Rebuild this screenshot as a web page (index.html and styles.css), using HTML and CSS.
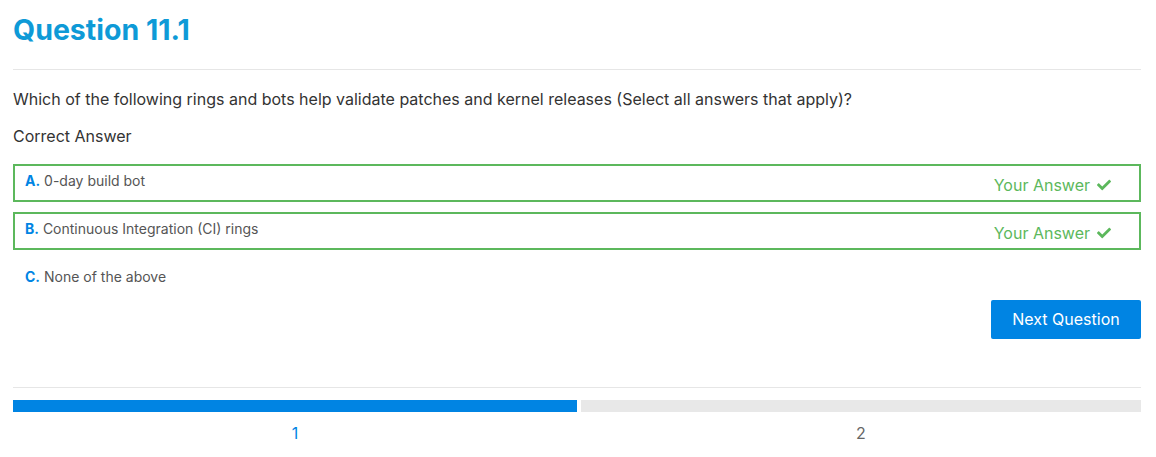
FILE: index.html
```html
<!DOCTYPE html>
<html>
<head>
<meta charset="utf-8">
<link rel="stylesheet" href="styles.css">
</head>
<body>
<div class="page">
  <h1 class="title">Question 11.1</h1>
  <hr class="rule rule-top">
  <p class="question">Which of the following rings and bots help validate patches and kernel releases (Select all answers that apply)?</p>
  <p class="status">Correct Answer</p>
  <div class="options">
    <div class="option option-correct">
      <span class="label"><b class="letter">A.</b> 0-day build bot</span>
      <span class="yours">Your Answer <svg class="check" viewBox="0 0 512 512" width="14" height="14"><path d="M173.9 439.4l-166.4-166.4c-10-10-10-26.2 0-36.2l36.2-36.2c10-10 26.2-10 36.2 0L192 312.7 432.1 72.6c10-10 26.2-10 36.2 0l36.2 36.2c10 10 10 26.2 0 36.2l-294.4 294.4c-10 10-26.2 10-36.2 0z" fill="currentColor"/></svg></span>
    </div>
    <div class="option option-correct">
      <span class="label"><b class="letter">B.</b> Continuous Integration (CI) rings</span>
      <span class="yours">Your Answer <svg class="check" viewBox="0 0 512 512" width="14" height="14"><path d="M173.9 439.4l-166.4-166.4c-10-10-10-26.2 0-36.2l36.2-36.2c10-10 26.2-10 36.2 0L192 312.7 432.1 72.6c10-10 26.2-10 36.2 0l36.2 36.2c10 10 10 26.2 0 36.2l-294.4 294.4c-10 10-26.2 10-36.2 0z" fill="currentColor"/></svg></span>
    </div>
    <div class="option">
      <span class="label"><b class="letter">C.</b> None of the above</span>
    </div>
  </div>
  <div class="actions">
    <button class="btn-next">Next Question</button>
  </div>
  <hr class="rule rule-bottom">
  <div class="progress">
    <div class="step step-done">
      <div class="bar"></div>
      <div class="num">1</div>
    </div>
    <div class="step step-next">
      <div class="bar"></div>
      <div class="num">2</div>
    </div>
  </div>
</div>
</body>
</html>
```

FILE: styles.css
```css
* { box-sizing: border-box; }
html, body { margin: 0; background: #fff; }
body { font-family: Inter, "Noto Sans", sans-serif; color: #333; }
.page { padding: 12px 15px 0 13px; }
.title {
  margin: 0;
  font-size: 28.5px;
  line-height: 36px;
  font-weight: 700;
  color: #0e9ad7;
}
.rule { border: 0; border-top: 1px solid #e6e6e6; margin: 0; }
.rule-top { margin-top: 21px; }
.question { margin: 17px 0 0; font-size: 16px; line-height: 24px; color: #333; }
.status { margin: 13px 0 0; font-size: 16px; line-height: 24px; color: #333; }
.options { margin-top: 16px; display: flex; flex-direction: column; gap: 10px; }
.option {
  height: 38px;
  border: 2px solid transparent;
  display: flex;
  justify-content: space-between;
  align-items: flex-start;
  padding: 5px 28px 0 10px;
}
.option-correct { border-color: #5cb85c; }
.label { font-size: 14px; line-height: 20px; color: #555; }
.letter { color: #0084e3; font-weight: 700; }
.yours {
  font-size: 16px;
  line-height: 24px;
  color: #5cb85c;
  padding-top: 2px;
  display: flex;
  align-items: center;
  gap: 7px;
}
.check { display: block; }
.actions { display: flex; justify-content: flex-end; margin-top: 2px; }
.btn-next {
  font-family: inherit;
  font-size: 16px;
  line-height: 20px;
  color: #fff;
  background: #0084e3;
  border: 0;
  border-radius: 2px;
  width: 150px;
  height: 39px;
  padding: 0 0 2px;
}
.rule-bottom { margin-top: 48px; }
.progress { display: flex; margin-top: 12px; }
.step { flex: 0 0 50%; }
.step-next { padding-left: 4px; }
.bar { height: 12px; background: #e8e8e8; }
.step-done .bar { background: #0084e3; }
.num { text-align: center; font-size: 16px; line-height: 24px; margin-top: 9px; color: #666; }
.step-done .num { color: #0084e3; }
```
